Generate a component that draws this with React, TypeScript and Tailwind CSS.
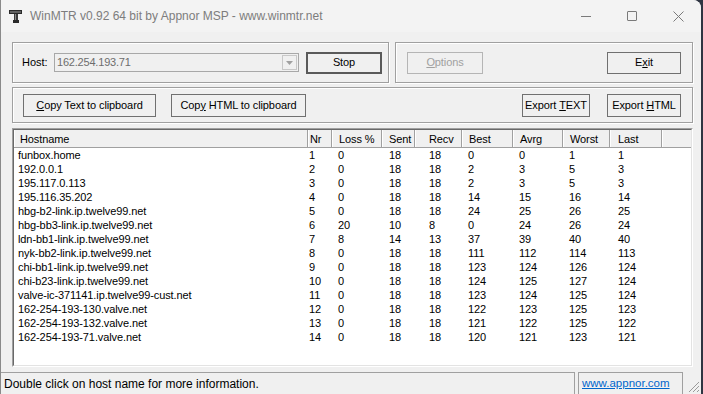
import clsx from 'clsx';

const rows = [
  ['funbox.home', '1', '0', '18', '18', '0', '0', '1', '1'],
  ['192.0.0.1', '2', '0', '18', '18', '2', '3', '5', '3'],
  ['195.117.0.113', '3', '0', '18', '18', '2', '3', '5', '3'],
  ['195.116.35.202', '4', '0', '18', '18', '14', '15', '16', '14'],
  ['hbg-b2-link.ip.twelve99.net', '5', '0', '18', '18', '24', '25', '26', '25'],
  ['hbg-bb3-link.ip.twelve99.net', '6', '20', '10', '8', '0', '24', '26', '24'],
  ['ldn-bb1-link.ip.twelve99.net', '7', '8', '14', '13', '37', '39', '40', '40'],
  ['nyk-bb2-link.ip.twelve99.net', '8', '0', '18', '18', '111', '112', '114', '113'],
  ['chi-bb1-link.ip.twelve99.net', '9', '0', '18', '18', '123', '124', '126', '124'],
  ['chi-b23-link.ip.twelve99.net', '10', '0', '18', '18', '124', '125', '127', '124'],
  ['valve-ic-371141.ip.twelve99-cust.net', '11', '0', '18', '18', '123', '124', '125', '124'],
  ['162-254-193-130.valve.net', '12', '0', '18', '18', '122', '123', '125', '123'],
  ['162-254-193-132.valve.net', '13', '0', '18', '18', '121', '122', '125', '122'],
  ['162-254-193-71.valve.net', '14', '0', '18', '18', '120', '121', '123', '121'],
];

// column widths + text offsets, measured off the list view
const cols = [
  { name: 'Hostname', w: 'w-[294px]', pl: 'pl-[4px]', hpl: 'pl-[6px]' },
  { name: 'Nr', w: 'w-[24px]', pl: 'pl-[1px]', hpl: 'pl-[2px]' },
  { name: 'Loss %', w: 'w-[50px]', pl: 'pl-[6px]', hpl: 'pl-[7px]' },
  { name: 'Sent', w: 'w-[33px]', pl: 'pl-[7px]', hpl: 'pl-[7px]' },
  { name: 'Recv', w: 'w-[47px]', pl: 'pl-[14px]', hpl: 'pl-[14px]' },
  { name: 'Best', w: 'w-[51px]', pl: 'pl-[6px]', hpl: 'pl-[7px]' },
  { name: 'Avrg', w: 'w-[50px]', pl: 'pl-[6px]', hpl: 'pl-[7px]' },
  { name: 'Worst', w: 'w-[47px]', pl: 'pl-[6px]', hpl: 'pl-[7px]' },
  { name: 'Last', w: 'w-[52px]', pl: 'pl-[8px]', hpl: 'pl-[8px]' },
];

type BtnProps = {
  children: React.ReactNode;
  className?: string;
  disabled?: boolean;
  primary?: boolean;
};

const Btn = ({ children, className, disabled, primary }: BtnProps) => (
  <div
    className={clsx(
      'flex items-center justify-center bg-[#f0f0f0] text-[11px] leading-none tracking-[-0.1px]',
      primary ? 'border-2 border-[#5a5a5a]' : 'border',
      disabled ? 'border-[#b5b5b5] text-[#a0a0a0]' : !primary && 'border-[#707070] text-black',
      className
    )}
  >
    {children}
  </div>
);

const Group = ({ children, className }: { children: React.ReactNode; className?: string }) => (
  <div
    className={clsx(
      'flex items-center border border-[#a0a0a0] shadow-[inset_1px_1px_0_#fff,1px_1px_0_#fff]',
      className
    )}
  >
    {children}
  </div>
);

const AppIcon = () => (
  <svg width="14" height="14" viewBox="0 0 14 14">
    <rect x="0" y="0" width="13" height="4" fill="#2a2a2a" />
    <rect x="1" y="1.5" width="11" height="1" fill="#9a9a9a" />
    <rect x="5" y="4" width="4" height="6" fill="#3a3a3a" />
    <rect x="6" y="4" width="1" height="6" fill="#8a8a8a" />
    <rect x="4" y="10" width="6" height="3" fill="#2a2a2a" />
  </svg>
);

export default function App() {
  return (
    <div
      className="w-[703px] h-[394px] bg-[#2f3542] overflow-hidden"
      style={{ fontFamily: '"Liberation Sans", Arial, sans-serif' }}
    >
      <div className="w-[701px] h-full bg-[#f0f0f0] rounded-tr-[8px] border-l border-[#8a8a8a] flex flex-col overflow-hidden">
        {/* title bar */}
        <div className="h-[32px] shrink-0 bg-[#f3f3f3] flex items-center">
          <div className="ml-[8px] mt-[1px]">
            <AppIcon />
          </div>
          <span className="ml-[7px] text-[12px] text-[#7d7d7d]">
            WinMTR v0.92 64 bit by Appnor MSP - www.winmtr.net
          </span>
          <div className="ml-auto flex h-full">
            <div className="w-[46px] flex items-center justify-center">
              <div className="w-[10px] h-px bg-[#7a7a7a]" />
            </div>
            <div className="w-[46px] flex items-center justify-center">
              <div className="w-[10px] h-[10px] border border-[#7a7a7a] rounded-[1px]" />
            </div>
            <div className="w-[46px] flex items-center justify-center">
              <svg width="11" height="11" viewBox="0 0 11 11">
                <path d="M0.5 0.5 L10.5 10.5 M10.5 0.5 L0.5 10.5" stroke="#7a7a7a" strokeWidth="1" />
              </svg>
            </div>
          </div>
        </div>

        {/* dialog body */}
        <div className="flex-1 flex flex-col pl-[11px]">
          <div className="mt-[10px] flex gap-[6px]">
            <Group className="w-[377px] h-[41px] pl-[9px]">
              <span className="w-[32px] text-[11px] text-black">Host:</span>
              <div className="w-[245px] h-[19px] border border-[#a8a8a8] bg-[#f0f0f0] flex items-center">
                <span className="pl-[2px] text-[11px] text-[#6d6d6d] tracking-[-0.2px]">162.254.193.71</span>
                <div className="ml-auto mr-[1px] w-[15px] h-[15px] border border-[#c8c8c8] flex items-center justify-center">
                  <svg width="7" height="4" viewBox="0 0 7 4">
                    <path d="M0 0 H7 L3.5 4 Z" fill="#a0a0a0" />
                  </svg>
                </div>
              </div>
              <Btn primary className="ml-[7px] w-[76px] h-[22px]">Stop</Btn>
            </Group>
            <Group className="w-[298px] h-[41px] px-[11px] justify-between">
              <Btn disabled className="w-[76px] h-[22px]">
                <span className="underline">O</span>ptions
              </Btn>
              <Btn className="w-[74px] h-[22px]">
                E<span className="underline">x</span>it
              </Btn>
            </Group>
          </div>

          <Group className="mt-[4px] w-[681px] h-[36px] pl-[10px] pr-[11px]">
            <Btn className="w-[133px] h-[23px]">
              <span className="underline">C</span>opy Text to clipboard
            </Btn>
            <Btn className="ml-[15px] w-[135px] h-[23px]">
              Cop<span className="underline">y</span>&nbsp;HTML to clipboard
            </Btn>
            <Btn className="ml-auto w-[68px] h-[23px]">
              Export&nbsp;<span className="underline">T</span>EXT
            </Btn>
            <Btn className="ml-[17px] w-[74px] h-[23px]">
              Export&nbsp;<span className="underline">H</span>TML
            </Btn>
          </Group>

          {/* list view */}
          <div className="mt-[5px] w-[681px] h-[239px] border border-[#a0a0a0] border-r-white border-b-white">
            <div className="h-full border border-[#696969] border-r-[#e3e3e3] border-b-[#e3e3e3] bg-white flex flex-col">
              <div className="h-[18px] shrink-0 flex bg-[#f0f0f0] border-b border-[#a0a0a0]">
                {cols.map((c) => (
                  <div
                    key={c.name}
                    className={clsx(
                      'h-full flex items-center pt-px border-r border-[#a0a0a0] shadow-[inset_1px_0_0_#fff] text-[11px] text-black tracking-[-0.1px]',
                      c.w,
                      c.hpl
                    )}
                  >
                    {c.name}
                  </div>
                ))}
                <div className="flex-1 h-full shadow-[inset_1px_0_0_#fff]" />
              </div>
              {rows.map((r) => (
                <div
                  key={r[0]}
                  className="h-[14px] flex items-center text-[11px] text-black leading-none tracking-[-0.1px]"
                >
                  {r.map((v, i) => (
                    <div key={i} className={clsx('whitespace-nowrap', cols[i].w, cols[i].pl)}>
                      {v}
                    </div>
                  ))}
                </div>
              ))}
            </div>
          </div>
        </div>

        {/* status bar */}
        <div className="h-[22px] shrink-0 flex items-stretch">
          <div className="w-[574px] border-t border-r border-[#a0a0a0] flex items-center pl-[3px] text-[12px] text-black">
            Double click on host name for more information.
          </div>
          <div className="ml-[3px] w-[105px] border-t border-x border-[#a0a0a0] flex items-center pl-[3px] text-[11.5px] text-[#0066cc] underline">
            www.appnor.com
          </div>
          <div className="flex-1 flex items-end justify-end pr-[1px] pb-[1px]">
            <svg width="12" height="12" viewBox="0 0 12 12">
              <path d="M11 1 L1 11 M11 5 L5 11 M11 9 L9 11" stroke="#9a9a9a" strokeWidth="1" />
            </svg>
          </div>
        </div>
      </div>
    </div>
  );
}
